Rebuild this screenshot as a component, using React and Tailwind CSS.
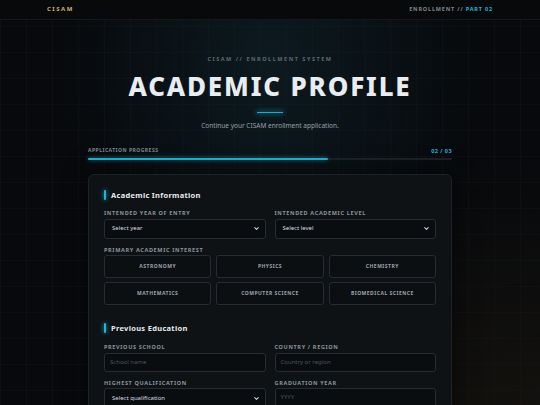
import React, { useState } from 'react';

const interests = [
  'Astronomy',
  'Physics',
  'Chemistry',
  'Mathematics',
  'Computer Science',
  'Biomedical Science',
];

const Chevron = () => (
  <svg width="7" height="7" viewBox="0 0 24 24" fill="none" stroke="#cbd5e1" strokeWidth="3.5" strokeLinecap="round" strokeLinejoin="round" className="shrink-0">
    <path d="M6 9l6 6 6-6" />
  </svg>
);

const Label = ({ children }) => (
  <div className="text-[5.5px] font-bold tracking-[0.12em] uppercase text-[#8b949c] mb-[2px] leading-none">
    {children}
  </div>
);

const SelectBox = ({ text }) => (
  <div className="h-[20px] rounded-[3px] border border-[#262c31] bg-[#0a0d10] flex items-center justify-between pl-[7px] pr-[5px]">
    <span className="text-[6px] text-[#d5dbe0]">{text}</span>
    <Chevron />
  </div>
);

const InputBox = ({ placeholder }) => (
  <div className="h-[19px] rounded-[3px] border border-[#262c31] bg-[#0a0d10] flex items-center px-[5px]">
    <span className="text-[6px] text-[#4a535b]">{placeholder}</span>
  </div>
);

const SectionTitle = ({ children }) => (
  <div className="flex items-center gap-[5px]">
    <span className="w-[2px] h-[10px] rounded-full bg-[#22b5d6] shadow-[0_0_4px_#22b5d6]" />
    <h2 className="text-[7.5px] font-bold tracking-[0.04em] text-[#e6ebef] leading-none">{children}</h2>
  </div>
);

export default function App() {
  const [selected, setSelected] = useState(null);

  return (
    <div
      className="min-h-screen w-full text-white overflow-hidden bg-[#07090c] [background-image:radial-gradient(ellipse_at_50%_15%,rgba(18,42,52,0.5),transparent_55%),radial-gradient(ellipse_at_100%_100%,rgba(30,24,16,0.6),transparent_45%),linear-gradient(rgba(255,255,255,0.018)_1px,transparent_1px),linear-gradient(90deg,rgba(255,255,255,0.018)_1px,transparent_1px)] [background-size:100%_100%,100%_100%,26px_26px,26px_26px]"
      style={{ fontFamily: '"Noto Sans", "Open Sans", sans-serif' }}
    >
      {/* Top bar */}
      <header className="h-[20px] bg-[#07090b] border-b border-[#14181c] flex items-center justify-between px-[47px]">
        <span className="text-[6px] font-bold tracking-[0.25em] text-[#cdb46e]">CISAM</span>
        <span className="text-[5.5px] font-bold tracking-[0.15em] text-[#7f8990]">
          ENROLLMENT // <span className="text-[#22b5d6]">PART 02</span>
        </span>
      </header>

      {/* Hero */}
      <section className="flex flex-col items-center pt-[37px]">
        <div className="text-[5.5px] font-bold tracking-[0.28em] text-[#5f6a72] leading-none">
          CISAM // ENROLLMENT SYSTEM
        </div>
        <h1 className="mt-[10px] text-[26px] font-extrabold tracking-[0.07em] text-[#e8edf1] leading-none">
          ACADEMIC PROFILE
        </h1>
        <div className="mt-[13px] w-[26px] h-[1px] bg-[#22a8c8] shadow-[0_0_5px_1px_rgba(34,168,200,0.5)]" />
        <p className="mt-[10px] text-[6.5px] text-[#98a2aa] leading-none">
          Continue your CISAM enrollment application.
        </p>
      </section>

      {/* Progress */}
      <div className="w-[364px] mx-auto mt-[18px]">
        <div className="flex justify-between items-center">
          <span className="text-[5px] font-bold tracking-[0.1em] text-[#7c868e]">APPLICATION PROGRESS</span>
          <span className="text-[5.5px] font-bold tracking-[0.08em] text-[#22b5d6]">02 / 03</span>
        </div>
        <div className="mt-[3px] h-[2px] rounded-full bg-[#1c2226]">
          <div className="h-full w-[66%] rounded-full bg-[#22b5d6] shadow-[0_0_4px_rgba(34,181,214,0.7)]" />
        </div>
      </div>

      {/* Card */}
      <div className="w-[364px] mx-auto mt-[14px] rounded-[6px] border border-[#1d2227] bg-[#0e1215] shadow-[0_0_24px_rgba(0,0,0,0.6)] px-[15px] pt-[15px] pb-[20px]">
        <SectionTitle>Academic Information</SectionTitle>

        <div className="mt-[11px] grid grid-cols-2 gap-x-[9px]">
          <div>
            <Label>Intended Year of Entry</Label>
            <SelectBox text="Select year" />
          </div>
          <div>
            <Label>Intended Academic Level</Label>
            <SelectBox text="Select level" />
          </div>
        </div>

        <div className="mt-[9px]">
          <Label>Primary Academic Interest</Label>
          <div className="mt-[1px] grid grid-cols-3 gap-x-[5px] gap-y-[4px]">
            {interests.map(item => (
              <button
                key={item}
                onClick={() => setSelected(item)}
                className={`h-[23px] rounded-[3px] border text-[5px] font-bold tracking-[0.1em] uppercase ${
                  selected === item
                    ? 'border-[#22b5d6] text-[#22b5d6] bg-[#0c1a1f]'
                    : 'border-[#262c31] text-[#9aa3ab] bg-[#0c0f12]'
                }`}
              >
                {item}
              </button>
            ))}
          </div>
        </div>

        <div className="mt-[18px]">
          <SectionTitle>Previous Education</SectionTitle>
        </div>

        <div className="mt-[12px] grid grid-cols-2 gap-x-[9px] gap-y-[9px]">
          <div>
            <Label>Previous School</Label>
            <InputBox placeholder="School name" />
          </div>
          <div>
            <Label>Country / Region</Label>
            <InputBox placeholder="Country or region" />
          </div>
          <div>
            <Label>Highest Qualification</Label>
            <SelectBox text="Select qualification" />
          </div>
          <div>
            <Label>Graduation Year</Label>
            <InputBox placeholder="YYYY" />
          </div>
        </div>
      </div>
    </div>
  );
}
